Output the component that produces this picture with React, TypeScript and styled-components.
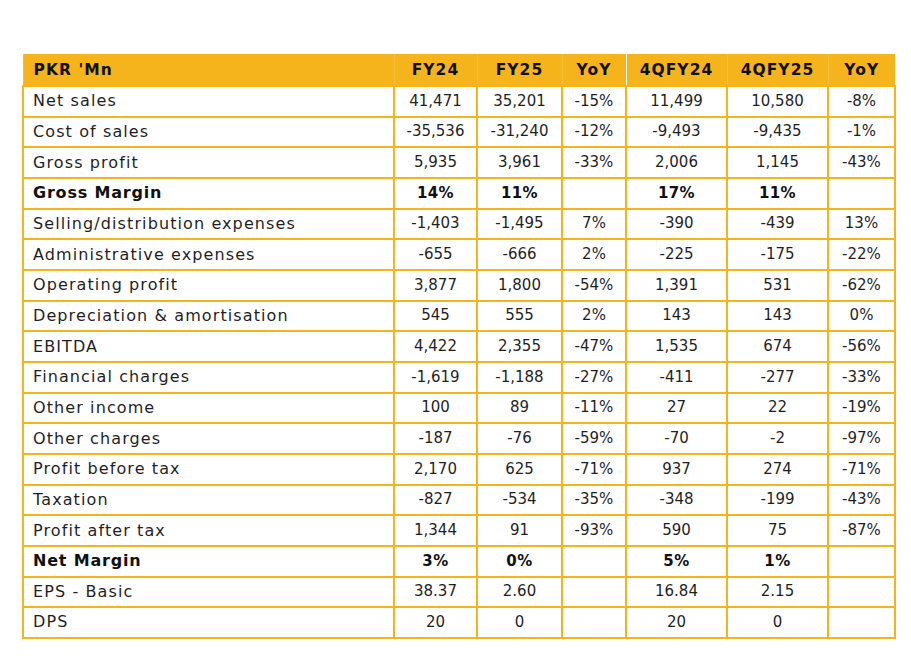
import React from "react";
import styled, { createGlobalStyle } from "styled-components";

const Global = createGlobalStyle`
  html, body { margin: 0; padding: 0; background: #ffffff; }
  body { font-family: "DejaVu Sans", "Liberation Sans", sans-serif; color: #1b1b1b; }
`;

const YELLOW = "#F5B41B";

const Page = styled.div`
  width: 911px;
  height: 666px;
  padding: 54px 0 0 22px;
  box-sizing: border-box;
`;

const Table = styled.table`
  border-collapse: collapse;
  table-layout: fixed;
  width: 872px;
`;

const HeadCell = styled.th<{ $align?: "left" | "center"; $divider?: boolean }>`
  background: ${YELLOW};
  height: 32px;
  padding: 0 0 0 ${(p) => (p.$align === "left" ? "10px" : "0")};
  text-align: ${(p) => p.$align ?? "center"};
  font-size: 15.5px;
  letter-spacing: 1.05px;
  font-weight: 700;
  color: #111;
  border: 0;
  border-left: 1px solid ${(p) => (p.$divider ? "#ffffff" : "#F7BD36")};
  box-sizing: border-box;
`;

const Row = styled.tr`
  height: 30.67px;
`;

const Cell = styled.td<{ $label?: boolean; $bold?: boolean }>`
  border: 2px solid ${YELLOW};
  padding: 0 0 0 ${(p) => (p.$label ? "9px" : "0")};
  text-align: ${(p) => (p.$label ? "left" : "center")};
  font-size: ${(p) => (p.$label ? "16px" : "15px")};
  letter-spacing: ${(p) => (p.$label ? (p.$bold ? "0.8px" : "1.1px") : p.$bold ? "0.4px" : "0")};
  font-weight: ${(p) => (p.$bold ? 700 : 400)};
  white-space: nowrap;
  line-height: 1;
  color: ${(p) => (p.$bold ? "#111" : "#1f1f1f")};
`;

type R = { label: string; v: string[]; bold?: boolean };

const rows: R[] = [
  { label: "Net sales", v: ["41,471", "35,201", "-15%", "11,499", "10,580", "-8%"] },
  { label: "Cost of sales", v: ["-35,536", "-31,240", "-12%", "-9,493", "-9,435", "-1%"] },
  { label: "Gross profit", v: ["5,935", "3,961", "-33%", "2,006", "1,145", "-43%"] },
  { label: "Gross Margin", v: ["14%", "11%", "", "17%", "11%", ""], bold: true },
  { label: "Selling/distribution expenses", v: ["-1,403", "-1,495", "7%", "-390", "-439", "13%"] },
  { label: "Administrative expenses", v: ["-655", "-666", "2%", "-225", "-175", "-22%"] },
  { label: "Operating profit", v: ["3,877", "1,800", "-54%", "1,391", "531", "-62%"] },
  { label: "Depreciation & amortisation", v: ["545", "555", "2%", "143", "143", "0%"] },
  { label: "EBITDA", v: ["4,422", "2,355", "-47%", "1,535", "674", "-56%"] },
  { label: "Financial charges", v: ["-1,619", "-1,188", "-27%", "-411", "-277", "-33%"] },
  { label: "Other income", v: ["100", "89", "-11%", "27", "22", "-19%"] },
  { label: "Other charges", v: ["-187", "-76", "-59%", "-70", "-2", "-97%"] },
  { label: "Profit before tax", v: ["2,170", "625", "-71%", "937", "274", "-71%"] },
  { label: "Taxation", v: ["-827", "-534", "-35%", "-348", "-199", "-43%"] },
  { label: "Profit after tax", v: ["1,344", "91", "-93%", "590", "75", "-87%"] },
  { label: "Net Margin", v: ["3%", "0%", "", "5%", "1%", ""], bold: true },
  { label: "EPS - Basic", v: ["38.37", "2.60", "", "16.84", "2.15", ""] },
  { label: "DPS", v: ["20", "0", "", "20", "0", ""] },
];

const widths = [371, 83, 85, 64, 101, 101, 67];
const heads = ["FY24", "FY25", "YoY", "4QFY24", "4QFY25", "YoY"];

export default function App() {
  return (
    <>
      <Global />
      <Page>
        <Table>
          <colgroup>
            {widths.map((w, i) => (
              <col key={i} style={{ width: w }} />
            ))}
          </colgroup>
          <thead>
            <tr>
              <HeadCell $align="left">PKR 'Mn</HeadCell>
              {heads.map((h, i) => (
                <HeadCell key={i} $divider={i === 3}>
                  {h}
                </HeadCell>
              ))}
            </tr>
          </thead>
          <tbody>
            {rows.map((r) => (
              <Row key={r.label}>
                <Cell $label $bold={r.bold}>
                  {r.label}
                </Cell>
                {r.v.map((v, i) => (
                  <Cell key={i} $bold={r.bold}>
                    {v}
                  </Cell>
                ))}
              </Row>
            ))}
          </tbody>
        </Table>
      </Page>
    </>
  );
}
